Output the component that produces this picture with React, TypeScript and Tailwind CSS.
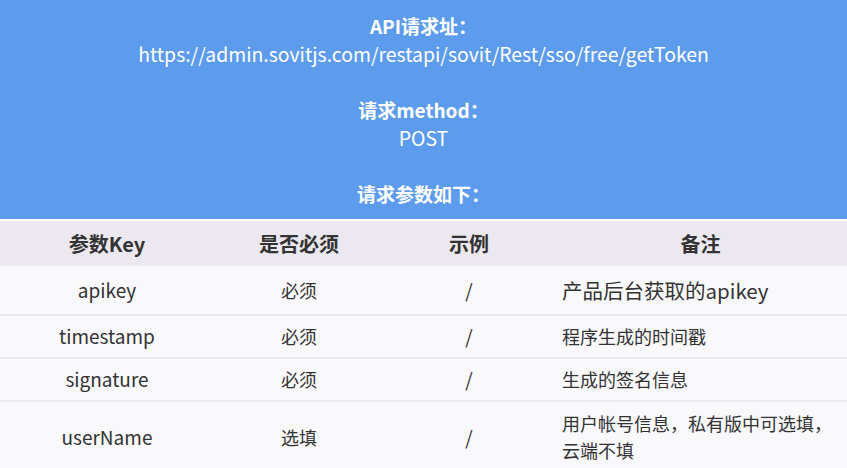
import React from "react";

const rows = [
  { key: "apikey", req: "必须", ex: "/", note: "产品后台获取的apikey", big: true, h: "h-[48px]" },
  { key: "timestamp", req: "必须", ex: "/", note: "程序生成的时间戳", h: "h-[43px]" },
  { key: "signature", req: "必须", ex: "/", note: "生成的签名信息", h: "h-[43px]" },
  { key: "userName", req: "选填", ex: "/", note: "用户帐号信息，私有版中可选填，云端不填", h: "h-[72px]" },
];

export default function App() {
  return (
    <div
      className="w-[847px] h-[468px] overflow-hidden bg-white"
      style={{ fontFamily: '"Noto Sans CJK SC", "Noto Sans", sans-serif' }}
    >
      <div className="bg-[#5d9cec] text-white text-center pt-[12px] pb-[11px] leading-[28px] h-[219px]">
        <div className="font-bold text-[19px]">API请求址：</div>
        <div className="text-[19.4px]">https://admin.sovitjs.com/restapi/sovit/Rest/sso/free/getToken</div>
        <div className="h-[28px]" />
        <div className="font-bold text-[19px]">请求method：</div>
        <div className="text-[19.4px]">POST</div>
        <div className="h-[28px]" />
        <div className="font-bold text-[19px]">请求参数如下：</div>
      </div>
      <div className="mt-[2px] grid grid-cols-[214px_170px_170px_1fr] h-[45px] items-center bg-[#ece8ef] text-[#333] font-bold text-[20px] text-center">
        <div>参数Key</div>
        <div>是否必须</div>
        <div>示例</div>
        <div>备注</div>
      </div>
      {rows.map((r, i) => (
        <div
          key={r.key}
          className={`grid grid-cols-[214px_170px_170px_1fr] items-center bg-[#f9f8fb] text-[#333] text-[19px] ${r.h} ${i > 0 ? "border-t-2 border-[#ebe9ef]" : ""}`}
        >
          <div className="text-center">{r.key}</div>
          <div className="text-center text-[18px]">{r.req}</div>
          <div className="text-center">{r.ex}</div>
          <div className={`pl-[8px] pr-[10px] leading-[27px] ${r.big ? "text-[20.5px]" : "text-[18px]"}`}>{r.note}</div>
        </div>
      ))}
    </div>
  );
}
